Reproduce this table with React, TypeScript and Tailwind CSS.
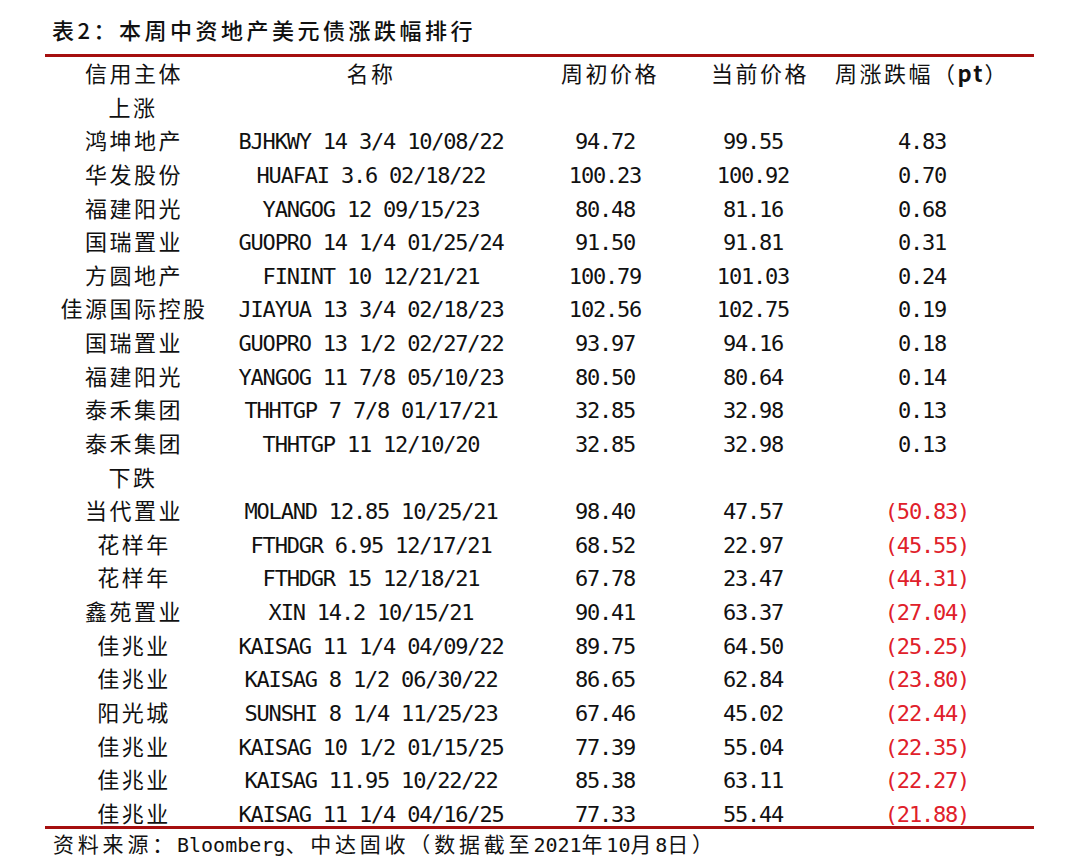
import React from "react";

type Row = { org: string; name: string; p0: string; p1: string; chg: string; neg?: boolean };

const up: Row[] = [
  { org: "鸿坤地产", name: "BJHKWY 14 3/4 10/08/22", p0: "94.72", p1: "99.55", chg: "4.83" },
  { org: "华发股份", name: "HUAFAI 3.6 02/18/22", p0: "100.23", p1: "100.92", chg: "0.70" },
  { org: "福建阳光", name: "YANGOG 12 09/15/23", p0: "80.48", p1: "81.16", chg: "0.68" },
  { org: "国瑞置业", name: "GUOPRO 14 1/4 01/25/24", p0: "91.50", p1: "91.81", chg: "0.31" },
  { org: "方圆地产", name: "FININT 10 12/21/21", p0: "100.79", p1: "101.03", chg: "0.24" },
  { org: "佳源国际控股", name: "JIAYUA 13 3/4 02/18/23", p0: "102.56", p1: "102.75", chg: "0.19" },
  { org: "国瑞置业", name: "GUOPRO 13 1/2 02/27/22", p0: "93.97", p1: "94.16", chg: "0.18" },
  { org: "福建阳光", name: "YANGOG 11 7/8 05/10/23", p0: "80.50", p1: "80.64", chg: "0.14" },
  { org: "泰禾集团", name: "THHTGP 7 7/8 01/17/21", p0: "32.85", p1: "32.98", chg: "0.13" },
  { org: "泰禾集团", name: "THHTGP 11 12/10/20", p0: "32.85", p1: "32.98", chg: "0.13" },
];

const down: Row[] = [
  { org: "当代置业", name: "MOLAND 12.85 10/25/21", p0: "98.40", p1: "47.57", chg: "(50.83)", neg: true },
  { org: "花样年", name: "FTHDGR 6.95 12/17/21", p0: "68.52", p1: "22.97", chg: "(45.55)", neg: true },
  { org: "花样年", name: "FTHDGR 15 12/18/21", p0: "67.78", p1: "23.47", chg: "(44.31)", neg: true },
  { org: "鑫苑置业", name: "XIN 14.2 10/15/21", p0: "90.41", p1: "63.37", chg: "(27.04)", neg: true },
  { org: "佳兆业", name: "KAISAG 11 1/4 04/09/22", p0: "89.75", p1: "64.50", chg: "(25.25)", neg: true },
  { org: "佳兆业", name: "KAISAG 8 1/2 06/30/22", p0: "86.65", p1: "62.84", chg: "(23.80)", neg: true },
  { org: "阳光城", name: "SUNSHI 8 1/4 11/25/23", p0: "67.46", p1: "45.02", chg: "(22.44)", neg: true },
  { org: "佳兆业", name: "KAISAG 10 1/2 01/15/25", p0: "77.39", p1: "55.04", chg: "(22.35)", neg: true },
  { org: "佳兆业", name: "KAISAG 11.95 10/22/22", p0: "85.38", p1: "63.11", chg: "(22.27)", neg: true },
  { org: "佳兆业", name: "KAISAG 11 1/4 04/16/25", p0: "77.33", p1: "55.44", chg: "(21.88)", neg: true },
];

const grid = "grid grid-cols-[176px_300px_168px_128px_210px] h-[33.64px] items-center";
const cjk = "font-['Noto_Sans_CJK_SC',sans-serif] text-[22px] leading-[30px] tracking-[2.5px] pb-[6px]";
const mono = "font-['DejaVu_Sans_Mono',monospace] text-[22px] leading-[30px] tracking-[-1.2px] whitespace-pre";
const lat = "font-['DejaVu_Sans_Mono',monospace] text-[20px] tracking-[0px]";

function DataRow({ r }: { r: Row }) {
  return (
    <div className={grid}>
      <div className={`text-center pl-[2px] ${cjk}`}>{r.org}</div>
      <div className={`text-center ${mono}`}>{r.name}</div>
      <div className={`text-center ${mono}`}>{r.p0}</div>
      <div className={`text-center ${mono}`}>{r.p1}</div>
      <div className={`text-center ${mono} ${r.neg ? "text-[#e0202a] pl-[10px]" : ""}`}>{r.chg}</div>
    </div>
  );
}

function SectionRow({ label }: { label: string }) {
  return (
    <div className={grid}>
      <div className={`text-center ${cjk}`}>{label}</div>
    </div>
  );
}

export default function App() {
  return (
    <div className="w-[1080px] h-[864px] bg-white text-[#111] overflow-hidden">
      <div className="h-[54px] pt-[3px] pl-[52px] flex items-center">
        <span className="font-['Noto_Sans_CJK_SC',sans-serif] text-[22px] leading-[30px] tracking-[3.5px] font-medium">
          表2：本周中资地产美元债涨跌幅排行
        </span>
      </div>
      <div className="ml-[45px] w-[989px] flex flex-col">
        <div className="h-[3px] bg-[#a50f0f]" />
        <div className={grid}>
          <div className={`text-center pl-[2px] ${cjk}`}>信用主体</div>
          <div className={`text-center ${cjk}`}>名称</div>
          <div className={`text-center pl-[10px] ${cjk}`}>周初价格</div>
          <div className={`text-center pl-[14px] ${cjk}`}>当前价格</div>
          <div className={`text-center ${cjk}`}>
            周涨跌幅（<span className="font-bold tracking-[2px]">pt</span>）
          </div>
        </div>
        <SectionRow label="上涨" />
        {up.map((r, i) => (
          <DataRow key={"u" + i} r={r} />
        ))}
        <SectionRow label="下跌" />
        {down.map((r, i) => (
          <DataRow key={"d" + i} r={r} />
        ))}
        <div className="h-[3px] -mt-[4px] bg-[#a50f0f]" />
      </div>
      <div className="pl-[53px] h-[34px] flex items-center pb-[4px]">
        <span className="font-['Noto_Sans_CJK_SC',sans-serif] text-[21px] leading-[30px] tracking-[3.8px]">
          资料来源：<span className={lat}>Bloomberg</span>、中达固收（数据截至<span className={lat}>2021</span>年<span className={lat}>10</span>月<span className={lat}>8</span>日）
        </span>
      </div>
    </div>
  );
}
